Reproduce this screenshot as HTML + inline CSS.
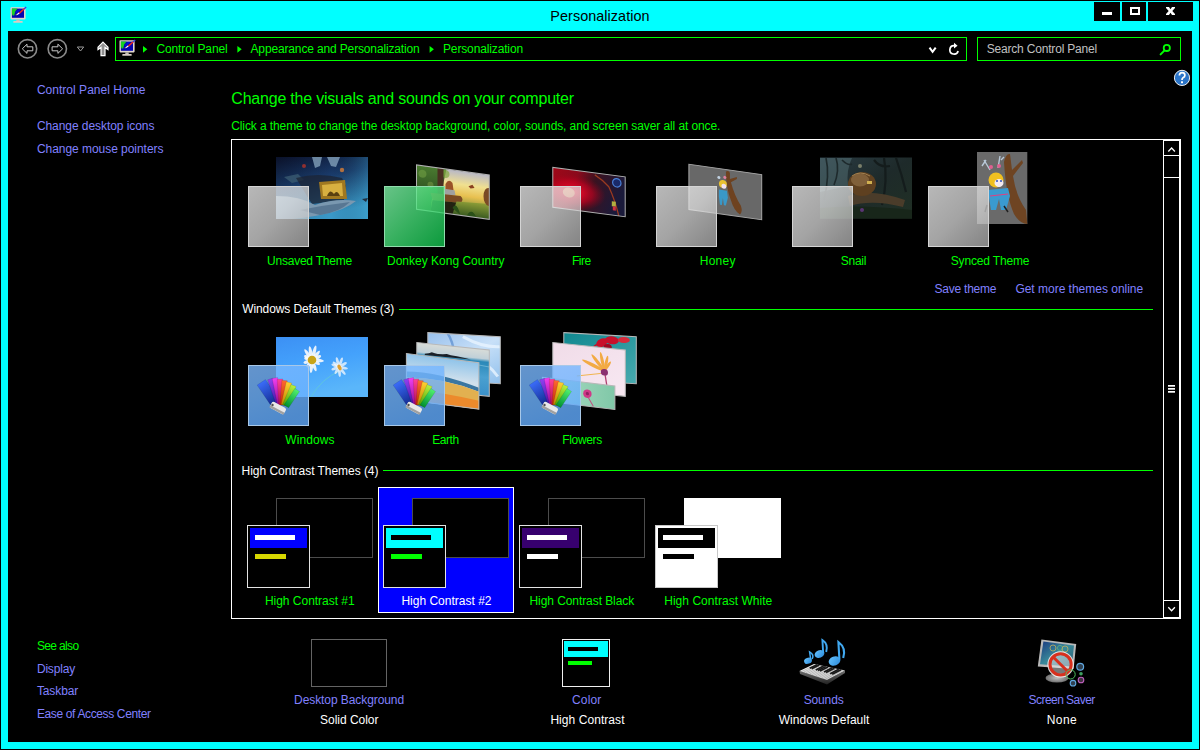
<!DOCTYPE html>
<html><head><meta charset="utf-8">
<style>
html,body{margin:0;padding:0;width:1200px;height:750px;overflow:hidden;background:#000;}
body{position:relative;font-family:"Liberation Sans",sans-serif;}
.a{position:absolute;box-sizing:border-box;}
.t{position:absolute;white-space:pre;font-family:"Liberation Sans",sans-serif;}
svg{position:absolute;overflow:visible;}
</style></head><body>
<!-- frame -->
<div class="a" style="left:1px;top:1px;width:1198px;height:748px;background:#00ffff"></div>
<div class="a" style="left:8px;top:31px;width:1184px;height:711px;background:#000"></div>
<!-- caption buttons -->
<div class="a" style="left:1094px;top:2px;width:26px;height:19px;background:#000"></div>
<div class="a" style="left:1122px;top:2px;width:24px;height:19px;background:#000"></div>
<div class="a" style="left:1148px;top:2px;width:45px;height:19px;background:#000"></div>
<div class="a" style="left:1102px;top:12px;width:10px;height:3px;background:#fff"></div>
<div class="a" style="left:1130px;top:7px;width:10px;height:8px;border:2px solid #fff"></div>
<svg style="left:0;top:0" width="1200" height="30"><path d="M1166 7 L1169 7 L1170.5 9.2 L1172 7 L1175 7 L1175 8 L1172.3 11 L1175 14 L1175 15 L1172 15 L1170.5 12.8 L1169 15 L1166 15 L1166 14 L1168.7 11 L1166 8 Z" fill="#fff"/></svg>
<!-- title icon -->
<svg style="left:0;top:0" width="40" height="30">
 <g id="cpicon">
  <rect x="10.5" y="7.3" width="15.1" height="12.1" rx="0.8" fill="#e2d6cc"/>
  <rect x="11.9" y="8.6" width="12.1" height="9.2" fill="#0404b0"/>
  <path d="M11.9 8.6 L17.6 8.6 L15.2 11.6 L14.2 15.4 L12.6 15.4 L11.9 13.5 Z" fill="#18d020"/>
  <path d="M15.3 12 L19.8 8.8 L21 9.6 L16.4 13.2 Z" fill="#0010e0" opacity="0.8"/>
  <path d="M18.6 12.8 L23.8 8.2 L24.8 9.2 L19.8 13.8 Z" fill="#f02a20"/>
  <path d="M23.6 8.4 L25.6 6.6 L26.6 7.6 L24.6 9.4 Z" fill="#3040e0"/>
  <path d="M16.6 14.2 L18.8 12.6 L19.6 13.6 L17.4 15 Z" fill="#ffffff"/>
  <path d="M15.6 14.8 L16.8 14 L17.2 14.8 L16 15.4 Z" fill="#d0a060"/>
  <rect x="16.3" y="19.4" width="3.4" height="1.7" fill="#c8c0b8"/>
  <rect x="13.3" y="21.1" width="9.4" height="1.6" rx="0.5" fill="#d8ccc4"/>
 </g>
</svg>
<svg style="left:109px;top:33px" width="40" height="30"><use href="#cpicon"/></svg>
<!-- nav buttons -->
<svg style="left:0;top:30px" width="120" height="40">
 <circle cx="27.5" cy="18.8" r="9.2" stroke="#8a8a8a" stroke-width="1.6" fill="none"/>
 <circle cx="57.3" cy="18.8" r="9.2" stroke="#8a8a8a" stroke-width="1.6" fill="none"/>
 <path d="M22.3 18.8 L27 14.2 L27 16.8 L32.8 16.8 L32.8 20.8 L27 20.8 L27 23.4 Z" stroke="#c8c8c8" stroke-width="1" fill="none" stroke-linejoin="miter"/>
 <path d="M62.6 18.8 L57.9 14.2 L57.9 16.8 L52.1 16.8 L52.1 20.8 L57.9 20.8 L57.9 23.4 Z" stroke="#c8c8c8" stroke-width="1" fill="none"/>
 <path d="M77.3 17 L83.7 17 L80.5 21 Z" stroke="#9a9a9a" stroke-width="1" fill="none"/>
 <path d="M103 12.2 L108 17.2 L108 19.6 L105 17.4 L105 25.6 L101 25.6 L101 17.4 L98 19.6 L98 17.2 Z" stroke="#fff" stroke-width="1.2" fill="#909090"/>
</svg>
<!-- breadcrumb arrows -->
<svg style="left:0;top:30px" width="500" height="40">
 <path d="M143 16 L147.3 19.3 L143 22.8 Z" fill="#00ff00"/>
 <path d="M237.4 16 L241.7 19.3 L237.4 22.8 Z" fill="#00ff00"/>
 <path d="M429.6 16 L433.9 19.3 L429.6 22.8 Z" fill="#00ff00"/>
</svg>
<!-- dropdown chevron + refresh -->
<svg style="left:900px;top:30px" width="300" height="70">
 <path d="M929.5 17.6 L932.6 21.8 L935.7 17.6" transform="translate(-900,0)" stroke="#fff" stroke-width="2" fill="none"/>
 <path d="M58.1 21 A4.2 4.2 0 1 1 54.3 15.7" stroke="#fff" stroke-width="1.7" fill="none"/>
 <path d="M54 12.8 L57.6 15.7 L54 18.4 Z" fill="#fff"/>
 <!-- search -->
 <circle cx="266.8" cy="17.9" r="3.1" stroke="#00ff00" stroke-width="1.8" fill="none"/>
 <path d="M264.3 20.6 L260.6 24.4" stroke="#00ff00" stroke-width="2" stroke-linecap="round"/>
 <!-- help -->
 <circle cx="282" cy="47.9" r="7.6" fill="#2a74c8" stroke="#f0f0f0" stroke-width="1"/>
 <path d="M279.4 45.6 Q279.4 42.6 282.1 42.6 Q284.9 42.6 284.9 45.2 Q284.9 46.8 283 47.8 Q282 48.4 282 50" stroke="#fff" stroke-width="1.7" fill="none"/>
 <rect x="281" y="51.3" width="2" height="1.9" fill="#fff"/>
</svg>

<!-- address & search -->
<div class="a" style="left:115px;top:37px;width:852px;height:24px;border:1px solid #00ff00"></div>
<div class="a" style="left:977px;top:37px;width:204px;height:24px;border:1px solid #00ff00"></div>
<!-- list box -->
<div class="a" style="left:231px;top:139px;width:950px;height:480px;border:1px solid #fff"></div>
<div class="a" style="left:1163px;top:139px;width:1px;height:480px;background:#fff"></div>
<div class="a" style="left:1179px;top:139px;width:1px;height:480px;background:#fff"></div>
<div class="a" style="left:1163px;top:140px;width:17px;height:1px;background:#fff"></div>
<div class="a" style="left:1163px;top:155px;width:17px;height:1px;background:#fff"></div>
<div class="a" style="left:1163px;top:177px;width:17px;height:1px;background:#fff"></div>
<div class="a" style="left:1163px;top:600px;width:17px;height:1px;background:#fff"></div>
<div class="a" style="left:1163px;top:617px;width:17px;height:1px;background:#fff"></div>
<svg style="left:1160px;top:130px" width="30" height="500">
 <path d="M8.3 21.5 L11.6 18 L14.9 21.5" stroke="#fff" stroke-width="1.3" fill="none"/>
 <path d="M8.3 477.3 L11.6 480.8 L14.9 477.3" stroke="#fff" stroke-width="1.3" fill="none"/>
 <rect x="8" y="255" width="7" height="1.7" fill="#fff"/>
 <rect x="8" y="258" width="7" height="1.7" fill="#fff"/>
 <rect x="8" y="261" width="7" height="1.7" fill="#fff"/>
</svg>

<svg style="left:0;top:0" width="1200" height="750">
<defs>
<linearGradient id="glass" x1="0" y1="0" x2="1" y2="1">
 <stop offset="0" stop-color="#ffffff" stop-opacity="0.72"/>
 <stop offset="0.5" stop-color="#e4e4e4" stop-opacity="0.72"/>
 <stop offset="1" stop-color="#b7b7b7" stop-opacity="0.72"/>
</linearGradient>
<linearGradient id="glassG" x1="0" y1="0" x2="1" y2="1">
 <stop offset="0" stop-color="#85fbae" stop-opacity="0.78"/>
 <stop offset="0.5" stop-color="#48e27b" stop-opacity="0.78"/>
 <stop offset="1" stop-color="#0fc54d" stop-opacity="0.78"/>
</linearGradient>
<linearGradient id="glassB" x1="0" y1="0" x2="0.4" y2="1">
 <stop offset="0" stop-color="#7db9ff" stop-opacity="0.8"/>
 <stop offset="0.5" stop-color="#70b4ff" stop-opacity="0.8"/>
 <stop offset="1" stop-color="#62acff" stop-opacity="0.8"/>
</linearGradient>
<linearGradient id="shine" x1="0" y1="0" x2="1" y2="1">
 <stop offset="0" stop-color="#fff" stop-opacity="0.08"/>
 <stop offset="0.5" stop-color="#fff" stop-opacity="0.03"/>
 <stop offset="0.5" stop-color="#fff" stop-opacity="0"/>
 <stop offset="1" stop-color="#fff" stop-opacity="0"/>
</linearGradient>
<linearGradient id="unsv" x1="0" y1="0" x2="0.35" y2="1">
 <stop offset="0" stop-color="#0c1430"/>
 <stop offset="0.45" stop-color="#1a3c6c"/>
 <stop offset="1" stop-color="#3a98c8"/>
</linearGradient>
<linearGradient id="dkc" x1="0" y1="0" x2="0" y2="1">
 <stop offset="0" stop-color="#b8b8c8"/>
 <stop offset="0.3" stop-color="#f0e090"/>
 <stop offset="0.55" stop-color="#e8c050"/>
 <stop offset="0.75" stop-color="#a0a040"/>
 <stop offset="1" stop-color="#406020"/>
</linearGradient>
<linearGradient id="fire" x1="0" y1="0" x2="1" y2="0.2">
 <stop offset="0" stop-color="#a00818"/>
 <stop offset="0.35" stop-color="#8a0a1c"/>
 <stop offset="0.6" stop-color="#3a1220"/>
 <stop offset="1" stop-color="#1a1a3a"/>
</linearGradient>
<radialGradient id="fireglow" cx="0.28" cy="0.55" r="0.45">
 <stop offset="0" stop-color="#ff1030" stop-opacity="0.95"/>
 <stop offset="0.6" stop-color="#d00020" stop-opacity="0.6"/>
 <stop offset="1" stop-color="#a00018" stop-opacity="0"/>
</radialGradient>
<linearGradient id="snail" x1="0" y1="0" x2="1" y2="1">
 <stop offset="0" stop-color="#2a3c44"/>
 <stop offset="0.5" stop-color="#1e2a2a"/>
 <stop offset="1" stop-color="#203024"/>
</linearGradient>
<linearGradient id="win" x1="0" y1="0" x2="0.3" y2="1">
 <stop offset="0" stop-color="#3c90f4"/>
 <stop offset="0.5" stop-color="#44a2fc"/>
 <stop offset="1" stop-color="#5ab6fa"/>
</linearGradient>
<linearGradient id="ice" x1="0" y1="0" x2="1" y2="1">
 <stop offset="0" stop-color="#98c0ec"/>
 <stop offset="0.5" stop-color="#c8e0f8"/>
 <stop offset="1" stop-color="#90c0ec"/>
</linearGradient>
<linearGradient id="sea" x1="0" y1="0" x2="0" y2="1">
 <stop offset="0" stop-color="#d8dcd8"/>
 <stop offset="0.2" stop-color="#c0d0d8"/>
 <stop offset="0.27" stop-color="#2a88b8"/>
 <stop offset="0.6" stop-color="#4aa0d0"/>
 <stop offset="1" stop-color="#3a90c8"/>
</linearGradient>
<linearGradient id="desert" x1="0" y1="0" x2="0" y2="1">
 <stop offset="0" stop-color="#90c4ea"/>
 <stop offset="0.45" stop-color="#d0e0ec"/>
 <stop offset="1" stop-color="#d0e0ec"/>
</linearGradient>
<linearGradient id="teal" x1="0" y1="0" x2="1" y2="1">
 <stop offset="0" stop-color="#108890"/>
 <stop offset="1" stop-color="#48aaae"/>
</linearGradient>
<linearGradient id="pink" x1="0" y1="0" x2="1" y2="1">
 <stop offset="0" stop-color="#f0dce8"/>
 <stop offset="1" stop-color="#f8e8f2"/>
</linearGradient>
<linearGradient id="mint" x1="0" y1="0" x2="1" y2="0">
 <stop offset="0" stop-color="#b0dcc4"/>
 <stop offset="1" stop-color="#80c8a8"/>
</linearGradient>
<linearGradient id="unsvR" x1="0" y1="0" x2="1" y2="0">
 <stop offset="0" stop-color="#000" stop-opacity="0.15"/>
 <stop offset="0.6" stop-color="#000" stop-opacity="0"/>
 <stop offset="1" stop-color="#40b0d0" stop-opacity="0.25"/>
</linearGradient>
<linearGradient id="jungle" x1="0" y1="0" x2="0" y2="1">
 <stop offset="0" stop-color="#4a7a30"/>
 <stop offset="1" stop-color="#1e3a18"/>
</linearGradient>
<linearGradient id="grass" x1="0" y1="0" x2="0" y2="1">
 <stop offset="0" stop-color="#90a038"/>
 <stop offset="1" stop-color="#3a5a20"/>
</linearGradient>
</defs>
<g>
<rect x="276" y="157" width="92" height="62" fill="url(#unsv)"/>
<rect x="276" y="157" width="92" height="62" fill="url(#unsvR)"/>
<path d="M312 157 L322 157 L320 166 L315 168 Z M327 157 L340 157 L336 167 L331 166 Z" fill="#8aa8c0" opacity="0.75"/>
<path d="M284 177 L298 174 L304 180 L292 183 Z" fill="#3a5a70" opacity="0.8"/>
<path d="M296 178 Q318 172 342 178 L346 186 L344 200 L312 204 Z" fill="#1c2434" opacity="0.75"/>
<path d="M319 182 L345 180 L347 199 L321 199 Z" fill="#a07820"/>
<path d="M322 185 L342 183 L343 196 L323 196 Z" fill="#d8b040"/>
<path d="M327 196 Q330 188 334 194 Q337 189 340 196 Z" fill="#5a4010"/>
<path d="M276 196 Q300 196 315 205 Q335 198 356 201 Q345 210 325 214 Q300 219 290 219 L276 219 Z" fill="#7a98b0"/>
<path d="M300 210 Q325 205 350 202 Q340 212 320 215 Z" fill="#4a6a88" opacity="0.7"/>
<circle cx="342" cy="170" r="2.2" fill="#b07040"/>
<circle cx="304" cy="166" r="2" fill="#903030"/>
<path d="M362 199 L368 198 L366 202 Z" fill="#203040"/>
</g>
<rect x="248.5" y="186.5" width="60" height="60" fill="url(#glass)" stroke="#d4d4d4" stroke-width="1"/>
<clipPath id="cdkc"><rect x="0" y="0" width="72.8" height="44.3"/></clipPath>
<g transform="matrix(1,0.139,0,1,416.5,164.9)"><g clip-path="url(#cdkc)">
<rect x="0" y="0" width="72.8" height="44.3" fill="url(#dkc)"/>
<path d="M0 0 L30 0 L27 14 L24 27 L16 28 L14 44.3 L0 44.3 Z" fill="url(#jungle)"/>
<circle cx="6" cy="8" r="4" fill="#7aa848" opacity="0.5"/><circle cx="14" cy="18" r="3" fill="#90b050" opacity="0.4"/><circle cx="29" cy="5" r="4" fill="#80a840" opacity="0.7"/>
<rect x="21" y="0" width="6" height="27" fill="#4a3020"/>
<path d="M29 15 Q32 9 36 13 L37 20 L29 21 Z" fill="#9a5228"/>
<path d="M28 20 L38 20 L39 25 L28 26 Z" fill="#a0a0a0"/>
<path d="M14 26 L44 25 Q48 28 44 32 L16 33 Z" fill="#7a4a24"/>
<path d="M16 33 L42 32 L38 44.3 L14 44.3 Z" fill="#222212"/>
<path d="M40 31 L72.8 29 L72.8 44.3 L36 44.3 Z" fill="url(#grass)"/>
<path d="M36 38 Q40 30 44 44.3 Z M50 44.3 Q55 34 60 44.3 Z" fill="#2a5018"/>
<ellipse cx="72" cy="22" rx="5" ry="9" fill="#7a4a24"/>
<path d="M52 14 L56 12 L58 15 L54 16 Z" fill="#8a4020"/>
</g><rect x="0" y="0" width="72.8" height="44.3" fill="none" stroke="#b0b0b0" stroke-width="1"/>
</g>
<rect x="384.5" y="186.5" width="60" height="60" fill="url(#glassG)" stroke="#90dcac" stroke-width="1"/>
<g transform="matrix(1,0.131,0,1,552.8,167.4)">
<rect x="0" y="0" width="72.4" height="39.9" fill="url(#fire)"/>
<rect x="0" y="0" width="72.4" height="39.9" fill="url(#fireglow)"/>
<ellipse cx="16" cy="23" rx="6" ry="5" fill="#f0e890" opacity="0.55"/>
<circle cx="64" cy="7" r="4.2" fill="#1a2a6a" stroke="#4a80d8" stroke-width="1.2"/>
<path d="M42 2 Q50 6 56 12 Q62 24 66 39.9" stroke="#9a3a20" stroke-width="1.3" fill="none"/>
<rect x="59" y="26" width="4" height="5" fill="#b0b040"/><rect x="60" y="31" width="3" height="4" fill="#d03040"/>
<rect x="0" y="0" width="72.4" height="39.9" fill="none" stroke="#b0b0b0" stroke-width="1"/>
</g>
<rect x="520.5" y="186.5" width="60" height="60" fill="url(#glass)" stroke="#d4d4d4" stroke-width="1"/>
<g transform="matrix(1,0.141,0,1,688.9,164.3)">
<rect x="0" y="0" width="72.8" height="45.2" fill="#686868" stroke="#a8a8a8" stroke-width="1"/>
<path d="M37 2 Q40 0 41 3 L41 9 L48 6 L48 8 L42 12 Q46 26 52 34 Q54 40 51 43 Q45 40 42 30 Q37 18 37 2 Z" fill="#6e4220"/>
<circle cx="34" cy="15" r="4" fill="#e8c030"/>
<circle cx="35" cy="17" r="2.5" fill="#f0e0f0"/>
<path d="M30 21 L38 21 L39 28 L37 36 L35 36 L34 29 L33 36 L31 36 L30 28 Z" fill="#3a98c8"/>
<circle cx="30" cy="9" r="1.5" fill="#c0d0e0"/><circle cx="36" cy="8" r="1.5" fill="#e080a0"/>
</g>
<rect x="656.5" y="186.5" width="60" height="60" fill="url(#glass)" stroke="#d4d4d4" stroke-width="1"/>
<rect x="820" y="157.5" width="92" height="61" fill="url(#snail)"/>
<path d="M820 158 L852 158 Q846 170 848 186 L820 192 Z" fill="#5a787c" opacity="0.45"/>
<path d="M826 158 Q830 175 824 200 M836 158 Q840 170 834 185 M842 160 Q848 166 852 164" stroke="#1e2a2c" stroke-width="1.6" fill="none"/>
<path d="M884 158 Q888 180 882 205 M896 158 Q902 175 906 192 M874 160 Q880 168 890 166" stroke="#141c1c" stroke-width="2.2" fill="none"/>
<path d="M848 196 Q870 188 905 200 L903 207 Q872 199 850 206 Z" fill="#4a3c2a"/>
<ellipse cx="862" cy="184" rx="14" ry="12" fill="#5e4020"/>
<ellipse cx="860" cy="180" rx="9" ry="6.5" fill="#80603a"/>
<path d="M852 176 Q860 170 870 176" stroke="#a08050" stroke-width="1" fill="none"/>
<rect x="867" y="181" width="5" height="3" fill="#d0b050"/>
<circle cx="860" cy="166" r="2" fill="#a0a080" opacity="0.7"/>
<path d="M820 208 Q860 204 912 210 L912 218.5 L820 218.5 Z" fill="#18261a"/>
<circle cx="862" cy="210" r="2" fill="#6a3a8a" opacity="0.8"/>
<rect x="792.5" y="186.5" width="60" height="60" fill="url(#glass)" stroke="#d4d4d4" stroke-width="1"/>
<rect x="977" y="152" width="50.3" height="72" fill="#6a6a6a"/>
<path d="M1004 162 Q1006 153 1010 154 L1012 170 L1022 160 L1023 163 L1013 176 Q1016 196 1026 210 L1027.3 224 Q1020 224 1014 214 Q1006 196 1004 162 Z" fill="#6e4422"/>
<path d="M984 160 L990 170 M986 160 L982 166 M1000 156 L998 168 M1001 160 L1004 157" stroke="#b8c8d8" stroke-width="1.4"/>
<circle cx="991" cy="167" r="2" fill="#e06090"/><circle cx="999" cy="166" r="2" fill="#e06090"/>
<circle cx="996" cy="180" r="7.5" fill="#f0c020"/>
<ellipse cx="999" cy="183" rx="4.5" ry="4" fill="#f4eaf0"/>
<circle cx="997" cy="181" r="1" fill="#3050c0"/><circle cx="1001" cy="181" r="1" fill="#3050c0"/>
<path d="M988 190 L1008 188 L1010 196 L1006 210 L1001 210 L999 199 L996 210 L991 210 L989 198 Z" fill="#3a9ad0"/>
<path d="M990 196 L1008 194" stroke="#e04080" stroke-width="1.2"/>
<path d="M987 205 L985 212 M1004 206 L1008 212" stroke="#202020" stroke-width="1.5"/>
<rect x="928.5" y="186.5" width="60" height="60" fill="url(#glass)" stroke="#d4d4d4" stroke-width="1"/>
<rect x="399" y="309" width="754" height="1" fill="#00ff00"/>
<rect x="383" y="470" width="770" height="1" fill="#00ff00"/>
<rect x="276" y="337" width="92" height="60" fill="url(#win)"/>
<path d="M340 371 Q322 378 311 397" stroke="#60c8d8" stroke-width="1" fill="none" opacity="0.8"/>
<g fill="#f8fafc">
<ellipse cx="312" cy="355.5" rx="1.7" ry="4.5" transform="rotate(-60 312 360)" opacity="0.9"/>
<ellipse cx="312" cy="353.5" rx="1.7" ry="6.5" transform="rotate(-35 312 360)" opacity="0.9"/>
<ellipse cx="312" cy="353.0" rx="1.7" ry="7.0" transform="rotate(-10 312 360)" opacity="0.9"/>
<ellipse cx="312" cy="352.5" rx="1.7" ry="7.5" transform="rotate(15 312 360)" opacity="0.9"/>
<ellipse cx="312" cy="354.0" rx="1.7" ry="6.0" transform="rotate(40 312 360)" opacity="0.9"/>
<ellipse cx="312" cy="355.0" rx="1.7" ry="5.0" transform="rotate(65 312 360)" opacity="0.9"/>
<ellipse cx="312" cy="354.0" rx="1.7" ry="6.0" transform="rotate(95 312 360)" opacity="0.9"/>
<ellipse cx="312" cy="355.5" rx="1.7" ry="4.5" transform="rotate(120 312 360)" opacity="0.9"/>
<ellipse cx="312" cy="354.0" rx="1.7" ry="6.0" transform="rotate(160 312 360)" opacity="0.9"/>
<ellipse cx="312" cy="353.5" rx="1.7" ry="6.5" transform="rotate(185 312 360)" opacity="0.9"/>
<ellipse cx="312" cy="355.5" rx="1.7" ry="4.5" transform="rotate(215 312 360)" opacity="0.9"/>
<ellipse cx="312" cy="355.5" rx="1.7" ry="4.5" transform="rotate(250 312 360)" opacity="0.9"/>
<ellipse cx="312" cy="356.0" rx="1.7" ry="4.0" transform="rotate(285 312 360)" opacity="0.9"/>
<ellipse cx="339" cy="363.0" rx="1.4" ry="4.0" transform="rotate(-50 339 367)" opacity="0.75"/>
<ellipse cx="339" cy="362.0" rx="1.4" ry="5.0" transform="rotate(-15 339 367)" opacity="0.75"/>
<ellipse cx="339" cy="362.0" rx="1.4" ry="5.0" transform="rotate(20 339 367)" opacity="0.75"/>
<ellipse cx="339" cy="362.5" rx="1.4" ry="4.5" transform="rotate(60 339 367)" opacity="0.75"/>
<ellipse cx="339" cy="362.5" rx="1.4" ry="4.5" transform="rotate(100 339 367)" opacity="0.75"/>
<ellipse cx="339" cy="362.0" rx="1.4" ry="5.0" transform="rotate(140 339 367)" opacity="0.75"/>
<ellipse cx="339" cy="362.0" rx="1.4" ry="5.0" transform="rotate(175 339 367)" opacity="0.75"/>
<ellipse cx="339" cy="363.0" rx="1.4" ry="4.0" transform="rotate(210 339 367)" opacity="0.75"/>
<ellipse cx="339" cy="363.0" rx="1.4" ry="4.0" transform="rotate(250 339 367)" opacity="0.75"/>
<ellipse cx="339" cy="363.0" rx="1.4" ry="4.0" transform="rotate(290 339 367)" opacity="0.75"/>
</g>
<circle cx="312" cy="360" r="4.3" fill="#c8a418"/>
<ellipse cx="339.5" cy="367.5" rx="1.8" ry="3" fill="#e0a030" transform="rotate(-25 339.5 367.5)"/>
<rect x="248.5" y="365.5" width="60" height="60" fill="url(#glassB)" stroke="#a8c8e8" stroke-width="1"/>
<linearGradient id="sw0_0" x1="0" y1="0" x2="0" y2="1"><stop offset="0" stop-color="#3a6cf8"/><stop offset="1" stop-color="#0c2080"/></linearGradient>
<linearGradient id="sw0_1" x1="0" y1="0" x2="0" y2="1"><stop offset="0" stop-color="#9040f0"/><stop offset="1" stop-color="#4010a0"/></linearGradient>
<linearGradient id="sw0_2" x1="0" y1="0" x2="0" y2="1"><stop offset="0" stop-color="#f040f0"/><stop offset="1" stop-color="#900890"/></linearGradient>
<linearGradient id="sw0_3" x1="0" y1="0" x2="0" y2="1"><stop offset="0" stop-color="#ff4098"/><stop offset="1" stop-color="#b01050"/></linearGradient>
<linearGradient id="sw0_4" x1="0" y1="0" x2="0" y2="1"><stop offset="0" stop-color="#ff6830"/><stop offset="1" stop-color="#c02808"/></linearGradient>
<linearGradient id="sw0_5" x1="0" y1="0" x2="0" y2="1"><stop offset="0" stop-color="#ffd030"/><stop offset="1" stop-color="#c08000"/></linearGradient>
<linearGradient id="sw0_6" x1="0" y1="0" x2="0" y2="1"><stop offset="0" stop-color="#b8f040"/><stop offset="1" stop-color="#50a000"/></linearGradient>
<linearGradient id="sw0_7" x1="0" y1="0" x2="0" y2="1"><stop offset="0" stop-color="#50f070"/><stop offset="1" stop-color="#009030"/></linearGradient>
<rect x="277.0" y="376.0" width="10" height="29.0" fill="url(#sw0_0)" stroke="#000" stroke-opacity="0.25" stroke-width="0.4" transform="rotate(-34 282 413)"/>
<rect x="279.2" y="377.0" width="5.5" height="28.0" fill="url(#sw0_1)" stroke="#000" stroke-opacity="0.25" stroke-width="0.4" transform="rotate(-19 282 413)"/>
<rect x="279.2" y="377.3" width="5.5" height="27.7" fill="url(#sw0_2)" stroke="#000" stroke-opacity="0.25" stroke-width="0.4" transform="rotate(-11.5 282 413)"/>
<rect x="279.2" y="379.0" width="5.5" height="26.0" fill="url(#sw0_3)" stroke="#000" stroke-opacity="0.25" stroke-width="0.4" transform="rotate(-3.4 282 413)"/>
<rect x="279.2" y="380.4" width="5.5" height="24.6" fill="url(#sw0_4)" stroke="#000" stroke-opacity="0.25" stroke-width="0.4" transform="rotate(4.6 282 413)"/>
<rect x="279.2" y="381.7" width="5.5" height="23.3" fill="url(#sw0_5)" stroke="#000" stroke-opacity="0.25" stroke-width="0.4" transform="rotate(13 282 413)"/>
<rect x="279.2" y="383.2" width="5.5" height="21.8" fill="url(#sw0_6)" stroke="#000" stroke-opacity="0.25" stroke-width="0.4" transform="rotate(23 282 413)"/>
<rect x="279.2" y="385.4" width="5.5" height="19.6" fill="url(#sw0_7)" stroke="#000" stroke-opacity="0.25" stroke-width="0.4" transform="rotate(33.5 282 413)"/>
<rect x="270" y="404.5" width="16" height="7" rx="2" fill="#e8e8e8" transform="rotate(28 278 408)"/>
<rect x="270" y="409" width="16" height="2.5" fill="#a0a0a0" transform="rotate(28 278 408)"/>
<circle cx="272.5" cy="405" r="1.2" fill="#505050"/>
<g transform="matrix(1,0.0566,0,1,427.8,332.6)"><rect x="0" y="0" width="72.5" height="47" fill="url(#ice)"/><path d="M20 0 Q30 15 26 47" stroke="#4a80c8" stroke-width="2.5" fill="none" opacity="0.6"/><path d="M35 2 Q55 12 72 10 M40 20 Q60 26 70 40" stroke="#e8f4ff" stroke-width="3" fill="none" opacity="0.8"/><rect x="0" y="0" width="72.5" height="47" fill="none" stroke="#b8b8b8" stroke-width="1"/></g>
<g transform="matrix(1,0.103,0,1,416.8,342.5)"><rect x="0" y="0" width="72.5" height="46.4" fill="url(#sea)"/><path d="M8 10.5 L12 9.6 L15 8.2 L18 8.8 L21 9.4 L26 9 L30 8.4 L34 9.2 L40 9.6 L48 10.6 L54 11.4 L8 11.8 Z" fill="#1a2028"/><path d="M0 16 Q36 13 72.5 17" stroke="#8cc8e0" stroke-width="1.2" fill="none" opacity="0.6"/><rect x="0" y="0" width="72.5" height="46.4" fill="none" stroke="#b8b8b8" stroke-width="1"/></g>
<g transform="matrix(1,0.128,0,1,406.4,353.5)"><rect x="0" y="0" width="72.5" height="46.4" fill="url(#desert)"/><path d="M0 18 Q30 14 72.5 25 L72.5 29 Q35 19 0 24 Z" fill="#2a6a98" opacity="0.9"/><path d="M0 24 Q35 19 72.5 29 L72.5 46.4 L0 46.4 Z" fill="#e2b050"/><path d="M0 36 Q35 34 72.5 38 L72.5 46.4 L0 46.4 Z" fill="#ec8a2c"/><rect x="0" y="0" width="72.5" height="46.4" fill="none" stroke="#b8b8b8" stroke-width="1"/></g>
<rect x="384.5" y="365.5" width="60" height="60" fill="url(#glassB)" stroke="#a8c8e8" stroke-width="1"/>
<linearGradient id="sw136_0" x1="0" y1="0" x2="0" y2="1"><stop offset="0" stop-color="#3a6cf8"/><stop offset="1" stop-color="#0c2080"/></linearGradient>
<linearGradient id="sw136_1" x1="0" y1="0" x2="0" y2="1"><stop offset="0" stop-color="#9040f0"/><stop offset="1" stop-color="#4010a0"/></linearGradient>
<linearGradient id="sw136_2" x1="0" y1="0" x2="0" y2="1"><stop offset="0" stop-color="#f040f0"/><stop offset="1" stop-color="#900890"/></linearGradient>
<linearGradient id="sw136_3" x1="0" y1="0" x2="0" y2="1"><stop offset="0" stop-color="#ff4098"/><stop offset="1" stop-color="#b01050"/></linearGradient>
<linearGradient id="sw136_4" x1="0" y1="0" x2="0" y2="1"><stop offset="0" stop-color="#ff6830"/><stop offset="1" stop-color="#c02808"/></linearGradient>
<linearGradient id="sw136_5" x1="0" y1="0" x2="0" y2="1"><stop offset="0" stop-color="#ffd030"/><stop offset="1" stop-color="#c08000"/></linearGradient>
<linearGradient id="sw136_6" x1="0" y1="0" x2="0" y2="1"><stop offset="0" stop-color="#b8f040"/><stop offset="1" stop-color="#50a000"/></linearGradient>
<linearGradient id="sw136_7" x1="0" y1="0" x2="0" y2="1"><stop offset="0" stop-color="#50f070"/><stop offset="1" stop-color="#009030"/></linearGradient>
<rect x="413.0" y="376.0" width="10" height="29.0" fill="url(#sw136_0)" stroke="#000" stroke-opacity="0.25" stroke-width="0.4" transform="rotate(-34 418 413)"/>
<rect x="415.2" y="377.0" width="5.5" height="28.0" fill="url(#sw136_1)" stroke="#000" stroke-opacity="0.25" stroke-width="0.4" transform="rotate(-19 418 413)"/>
<rect x="415.2" y="377.3" width="5.5" height="27.7" fill="url(#sw136_2)" stroke="#000" stroke-opacity="0.25" stroke-width="0.4" transform="rotate(-11.5 418 413)"/>
<rect x="415.2" y="379.0" width="5.5" height="26.0" fill="url(#sw136_3)" stroke="#000" stroke-opacity="0.25" stroke-width="0.4" transform="rotate(-3.4 418 413)"/>
<rect x="415.2" y="380.4" width="5.5" height="24.6" fill="url(#sw136_4)" stroke="#000" stroke-opacity="0.25" stroke-width="0.4" transform="rotate(4.6 418 413)"/>
<rect x="415.2" y="381.7" width="5.5" height="23.3" fill="url(#sw136_5)" stroke="#000" stroke-opacity="0.25" stroke-width="0.4" transform="rotate(13 418 413)"/>
<rect x="415.2" y="383.2" width="5.5" height="21.8" fill="url(#sw136_6)" stroke="#000" stroke-opacity="0.25" stroke-width="0.4" transform="rotate(23 418 413)"/>
<rect x="415.2" y="385.4" width="5.5" height="19.6" fill="url(#sw136_7)" stroke="#000" stroke-opacity="0.25" stroke-width="0.4" transform="rotate(33.5 418 413)"/>
<rect x="406" y="404.5" width="16" height="7" rx="2" fill="#e8e8e8" transform="rotate(28 414 408)"/>
<rect x="406" y="409" width="16" height="2.5" fill="#a0a0a0" transform="rotate(28 414 408)"/>
<circle cx="408.5" cy="405" r="1.2" fill="#505050"/>
<g transform="matrix(1,0.0566,0,1,563.8,332.6)"><rect x="0" y="0" width="72.5" height="47" fill="url(#teal)"/><g fill="#c8102a"><ellipse cx="38" cy="8" rx="6" ry="4" transform="rotate(-30 38 8)"/><ellipse cx="48" cy="5" rx="7" ry="4"/><ellipse cx="60" cy="4" rx="6" ry="3" fill="#d82a3a"/><ellipse cx="44" cy="12" rx="4" ry="3" fill="#a00820"/></g><path d="M33 10 L28 14" stroke="#c01028" stroke-width="1.5"/><rect x="0" y="0" width="72.5" height="47" fill="none" stroke="#b8b8b8" stroke-width="1"/></g>
<g transform="matrix(1,0.103,0,1,552.8,342.5)"><rect x="0" y="0" width="72.5" height="46.4" fill="url(#pink)"/><path d="M52 25 Q54 36 55 46" stroke="#b04070" stroke-width="1.3" fill="none"/><g fill="#f2a83a" opacity="0.95"><ellipse cx="40.5" cy="18.7" rx="1.8" ry="12.0" transform="rotate(-68 40.5 18.7)"/><ellipse cx="45.2" cy="15.5" rx="1.7" ry="10.0" transform="rotate(-40 45.2 15.5)"/><ellipse cx="49.6" cy="13.9" rx="1.6" ry="9.5" transform="rotate(-12 49.6 13.9)"/><ellipse cx="53.3" cy="15.4" rx="1.5" ry="8.0" transform="rotate(12 53.3 15.4)"/><ellipse cx="54.8" cy="18.1" rx="1.3" ry="6.0" transform="rotate(32 54.8 18.1)"/></g><ellipse cx="51.6" cy="24.5" rx="3.6" ry="3.2" fill="#8a3070"/><path d="M48 26 L24 31" stroke="#f0b040" stroke-width="0.9"/><rect x="0" y="0" width="72.5" height="46.4" fill="none" stroke="#b8b8b8" stroke-width="1"/></g>
<g transform="matrix(1,0.12,0,1,542.4,377.3)"><rect x="0" y="0" width="72.5" height="23.5" fill="url(#mint)"/><circle cx="45" cy="11" r="4.2" fill="#d03888"/><circle cx="45" cy="11" r="1.6" fill="#902060"/><path d="M46 15 L51 23" stroke="#c05080" stroke-width="1" fill="none"/><rect x="0" y="0" width="72.5" height="23.5" fill="none" stroke="#b8b8b8" stroke-width="1"/></g>
<rect x="520.5" y="365.5" width="60" height="60" fill="url(#glassB)" stroke="#a8c8e8" stroke-width="1"/>
<linearGradient id="sw272_0" x1="0" y1="0" x2="0" y2="1"><stop offset="0" stop-color="#3a6cf8"/><stop offset="1" stop-color="#0c2080"/></linearGradient>
<linearGradient id="sw272_1" x1="0" y1="0" x2="0" y2="1"><stop offset="0" stop-color="#9040f0"/><stop offset="1" stop-color="#4010a0"/></linearGradient>
<linearGradient id="sw272_2" x1="0" y1="0" x2="0" y2="1"><stop offset="0" stop-color="#f040f0"/><stop offset="1" stop-color="#900890"/></linearGradient>
<linearGradient id="sw272_3" x1="0" y1="0" x2="0" y2="1"><stop offset="0" stop-color="#ff4098"/><stop offset="1" stop-color="#b01050"/></linearGradient>
<linearGradient id="sw272_4" x1="0" y1="0" x2="0" y2="1"><stop offset="0" stop-color="#ff6830"/><stop offset="1" stop-color="#c02808"/></linearGradient>
<linearGradient id="sw272_5" x1="0" y1="0" x2="0" y2="1"><stop offset="0" stop-color="#ffd030"/><stop offset="1" stop-color="#c08000"/></linearGradient>
<linearGradient id="sw272_6" x1="0" y1="0" x2="0" y2="1"><stop offset="0" stop-color="#b8f040"/><stop offset="1" stop-color="#50a000"/></linearGradient>
<linearGradient id="sw272_7" x1="0" y1="0" x2="0" y2="1"><stop offset="0" stop-color="#50f070"/><stop offset="1" stop-color="#009030"/></linearGradient>
<rect x="549.0" y="376.0" width="10" height="29.0" fill="url(#sw272_0)" stroke="#000" stroke-opacity="0.25" stroke-width="0.4" transform="rotate(-34 554 413)"/>
<rect x="551.2" y="377.0" width="5.5" height="28.0" fill="url(#sw272_1)" stroke="#000" stroke-opacity="0.25" stroke-width="0.4" transform="rotate(-19 554 413)"/>
<rect x="551.2" y="377.3" width="5.5" height="27.7" fill="url(#sw272_2)" stroke="#000" stroke-opacity="0.25" stroke-width="0.4" transform="rotate(-11.5 554 413)"/>
<rect x="551.2" y="379.0" width="5.5" height="26.0" fill="url(#sw272_3)" stroke="#000" stroke-opacity="0.25" stroke-width="0.4" transform="rotate(-3.4 554 413)"/>
<rect x="551.2" y="380.4" width="5.5" height="24.6" fill="url(#sw272_4)" stroke="#000" stroke-opacity="0.25" stroke-width="0.4" transform="rotate(4.6 554 413)"/>
<rect x="551.2" y="381.7" width="5.5" height="23.3" fill="url(#sw272_5)" stroke="#000" stroke-opacity="0.25" stroke-width="0.4" transform="rotate(13 554 413)"/>
<rect x="551.2" y="383.2" width="5.5" height="21.8" fill="url(#sw272_6)" stroke="#000" stroke-opacity="0.25" stroke-width="0.4" transform="rotate(23 554 413)"/>
<rect x="551.2" y="385.4" width="5.5" height="19.6" fill="url(#sw272_7)" stroke="#000" stroke-opacity="0.25" stroke-width="0.4" transform="rotate(33.5 554 413)"/>
<rect x="542" y="404.5" width="16" height="7" rx="2" fill="#e8e8e8" transform="rotate(28 550 408)"/>
<rect x="542" y="409" width="16" height="2.5" fill="#a0a0a0" transform="rotate(28 550 408)"/>
<circle cx="544.5" cy="405" r="1.2" fill="#505050"/>
<rect x="378.5" y="487.5" width="135" height="125" fill="#0000ff" stroke="#fff" stroke-width="1"/>
<rect x="276.5" y="498.5" width="96" height="59" fill="#000" stroke="#4c4c4c" stroke-width="1"/>
<rect x="247.5" y="525.5" width="62" height="62" fill="#000" stroke="#e4e4e4" stroke-width="1"/>
<rect x="250" y="528" width="57" height="20" fill="#0000ff"/>
<rect x="255" y="535" width="40" height="5" fill="#ffffff"/>
<rect x="255" y="554" width="31" height="5" fill="#d8d800"/>
<rect x="412.5" y="498.5" width="96" height="59" fill="#000" stroke="#4c4c4c" stroke-width="1"/>
<rect x="383.5" y="525.5" width="62" height="62" fill="#000" stroke="#e4e4e4" stroke-width="1"/>
<rect x="386" y="528" width="57" height="20" fill="#00ffff"/>
<rect x="391" y="535" width="40" height="5" fill="#000000"/>
<rect x="391" y="554" width="31" height="5" fill="#00ff00"/>
<rect x="548.5" y="498.5" width="96" height="59" fill="#000" stroke="#4c4c4c" stroke-width="1"/>
<rect x="519.5" y="525.5" width="62" height="62" fill="#000" stroke="#e4e4e4" stroke-width="1"/>
<rect x="522" y="528" width="57" height="20" fill="#37006e"/>
<rect x="527" y="535" width="40" height="5" fill="#ffffff"/>
<rect x="527" y="554" width="31" height="5" fill="#ffffff"/>
<rect x="684.5" y="498.5" width="96" height="59" fill="#ffffff" stroke="#ffffff" stroke-width="1"/>
<rect x="655.5" y="525.5" width="62" height="62" fill="#ffffff" stroke="#c8c8c8" stroke-width="1"/>
<rect x="658" y="528" width="57" height="20" fill="#000000"/>
<rect x="663" y="535" width="40" height="5" fill="#ffffff"/>
<rect x="663" y="554" width="31" height="5" fill="#000000"/>
</svg>
<div class="a" style="left:311px;top:639px;width:76px;height:48px;border:1px solid #646464"></div>
<div class="a" style="left:562px;top:639px;width:48px;height:48px;border:1px solid #f0f0f0;background:#000"></div>
<div class="a" style="left:564px;top:641px;width:44px;height:16px;background:#00ffff"></div>
<div class="a" style="left:568px;top:647px;width:30px;height:4px;background:#000"></div>
<div class="a" style="left:568px;top:661px;width:24px;height:4px;background:#00ff00"></div>
<!-- sounds icon -->
<svg style="left:790px;top:630px" width="70" height="60">
 <defs>
  <linearGradient id="kb" x1="0" y1="0" x2="1" y2="1">
   <stop offset="0" stop-color="#f4f4f4"/><stop offset="0.7" stop-color="#dcdcdc"/><stop offset="1" stop-color="#a0a0a0"/>
  </linearGradient>
  <linearGradient id="kbe" x1="0" y1="0" x2="0" y2="1">
   <stop offset="0" stop-color="#707070"/><stop offset="1" stop-color="#202020"/>
  </linearGradient>
  <linearGradient id="note" x1="0" y1="0" x2="1" y2="1">
   <stop offset="0" stop-color="#68c4ff"/><stop offset="1" stop-color="#2a88d8"/>
  </linearGradient>
 </defs>
 <path d="M9.5 41 L37 50 L55 40.5 L55 43.0 L37 54.5 L10.0 44 Z" fill="url(#kbe)"/>
 <path d="M24 34 L55 40.5 L37 50 L9.5 41 Z" fill="url(#kb)"/>
 <path d="M26.21 34.46 L11.46 41.64" stroke="#8a8a8a" stroke-width="0.5"/><path d="M28.43 34.93 L13.43 42.29" stroke="#8a8a8a" stroke-width="0.5"/><path d="M30.64 35.39 L15.39 42.93" stroke="#8a8a8a" stroke-width="0.5"/><path d="M32.86 35.86 L17.36 43.57" stroke="#8a8a8a" stroke-width="0.5"/><path d="M35.07 36.32 L19.32 44.21" stroke="#8a8a8a" stroke-width="0.5"/><path d="M37.29 36.79 L21.29 44.86" stroke="#8a8a8a" stroke-width="0.5"/><path d="M39.50 37.25 L23.25 45.50" stroke="#8a8a8a" stroke-width="0.5"/><path d="M41.71 37.71 L25.21 46.14" stroke="#8a8a8a" stroke-width="0.5"/><path d="M43.93 38.18 L27.18 46.79" stroke="#8a8a8a" stroke-width="0.5"/><path d="M46.14 38.64 L29.14 47.43" stroke="#8a8a8a" stroke-width="0.5"/><path d="M48.36 39.11 L31.11 48.07" stroke="#8a8a8a" stroke-width="0.5"/><path d="M50.57 39.57 L33.07 48.71" stroke="#8a8a8a" stroke-width="0.5"/><path d="M52.79 40.04 L35.04 49.36" stroke="#8a8a8a" stroke-width="0.5"/><path d="M27.10 34.65 L19.68 38.27" stroke="#181818" stroke-width="1.7"/><path d="M29.27 35.10 L21.72 38.82" stroke="#181818" stroke-width="1.7"/><path d="M33.61 36.02 L25.82 39.90" stroke="#181818" stroke-width="1.7"/><path d="M35.78 36.47 L27.87 40.45" stroke="#181818" stroke-width="1.7"/><path d="M37.95 36.92 L29.91 40.99" stroke="#181818" stroke-width="1.7"/><path d="M42.29 37.84 L34.01 42.07" stroke="#181818" stroke-width="1.7"/><path d="M44.46 38.29 L36.05 42.61" stroke="#181818" stroke-width="1.7"/><path d="M48.80 39.20 L40.15 43.70" stroke="#181818" stroke-width="1.7"/><path d="M50.97 39.66 L42.20 44.24" stroke="#181818" stroke-width="1.7"/>
 <!-- notes -->
 <ellipse cx="18" cy="30.8" rx="4" ry="3" fill="url(#note)" transform="rotate(-20 18 30.8)"/>
 <path d="M20.8 30 L19.6 21.8 Q24.5 24.5 22.2 29" stroke="#40a8f0" stroke-width="1.5" fill="none"/>
 <ellipse cx="29.5" cy="24" rx="5" ry="3.8" fill="url(#note)" transform="rotate(-20 29.5 24)"/>
 <path d="M33.2 23 L32.4 10 Q38.5 14 36.2 22" stroke="#40a8f0" stroke-width="1.9" fill="none"/>
 <ellipse cx="44.5" cy="31" rx="6" ry="4.6" fill="url(#note)" transform="rotate(-20 44.5 31)"/>
 <path d="M49.4 29.5 L48.4 12 Q56.5 18 53.2 28" stroke="#40a8f0" stroke-width="2.1" fill="none"/>
</svg>
<!-- screen saver icon -->
<svg style="left:1025px;top:630px" width="70" height="60">
 <defs>
  <linearGradient id="scr" x1="0" y1="0" x2="1" y2="1">
   <stop offset="0" stop-color="#1a3a80"/><stop offset="0.5" stop-color="#3a8a9a"/><stop offset="1" stop-color="#2a5a70"/>
  </linearGradient>
  <radialGradient id="stand" cx="0.5" cy="0.5" r="0.5">
   <stop offset="0" stop-color="#c0c0c0"/><stop offset="1" stop-color="#707070"/>
  </radialGradient>
 </defs>
 <ellipse cx="32" cy="48" rx="11.5" ry="4.5" fill="url(#stand)"/>
 <path d="M16.4 9.4 L51.2 14 L48.6 39 L12.8 36.4 Z" fill="#b8b8b8"/>
 <path d="M18.4 11.6 L49 15.6 L46.8 36.6 L15 34.2 Z" fill="url(#scr)"/>
 <circle cx="28" cy="18" r="3" fill="none" stroke="#c0b060" stroke-width="0.8"/>
 <circle cx="35" cy="18" r="2.6" fill="none" stroke="#60b080" stroke-width="0.8"/>
 <circle cx="40" cy="19" r="3" fill="none" stroke="#c0b060" stroke-width="0.8"/>
 <circle cx="35.6" cy="34.4" r="13.2" fill="#f0f0f0" opacity="0.5"/><circle cx="35.6" cy="34.4" r="12.4" fill="none" stroke="#f8f8f8" stroke-width="1.4" opacity="0.7"/>
 <circle cx="35.6" cy="34.4" r="10.6" fill="none" stroke="#d8301e" stroke-width="3"/>
 <path d="M28.2 27 L43 41.8" stroke="#d8301e" stroke-width="3"/>
 <circle cx="45.6" cy="44.4" r="4.6" fill="none" stroke="#50c060" stroke-width="1"/>
 <circle cx="55.2" cy="36.8" r="3.4" fill="#304050" stroke="#60a8e0" stroke-width="1.2"/>
 <circle cx="56" cy="43.8" r="1.8" fill="#40a060"/>
 <circle cx="56" cy="50" r="2.8" fill="#403040" stroke="#c060c0" stroke-width="1.1"/>
 <circle cx="48" cy="53.2" r="2.8" fill="#304050" stroke="#60a8e0" stroke-width="1.1"/>
</svg>

<div class="t" style="left:550.34px;top:8.11px;font-size:14.4px;line-height:17px;color:#000;letter-spacing:0.057px">Personalization</div>
<div class="t" style="left:156.40px;top:42.04px;font-size:12px;line-height:14px;color:#00ff00;letter-spacing:-0.118px">Control Panel</div>
<div class="t" style="left:250.50px;top:42.04px;font-size:12px;line-height:14px;color:#00ff00;letter-spacing:-0.144px">Appearance and Personalization</div>
<div class="t" style="left:443.00px;top:42.04px;font-size:12px;line-height:14px;color:#00ff00;letter-spacing:-0.140px">Personalization</div>
<div class="t" style="left:986.70px;top:41.84px;font-size:12px;line-height:14px;color:#c0c0c0;letter-spacing:-0.186px">Search Control Panel</div>
<div class="t" style="left:36.90px;top:82.84px;font-size:12px;line-height:14px;color:#8080ff;letter-spacing:0.026px">Control Panel Home</div>
<div class="t" style="left:36.90px;top:119.04px;font-size:12px;line-height:14px;color:#8080ff;letter-spacing:-0.066px">Change desktop icons</div>
<div class="t" style="left:36.90px;top:141.54px;font-size:12px;line-height:14px;color:#8080ff;letter-spacing:-0.041px">Change mouse pointers</div>
<div class="t" style="left:231.30px;top:88.86px;font-size:16px;line-height:19px;color:#00ff00;letter-spacing:-0.209px">Change the visuals and sounds on your computer</div>
<div class="t" style="left:231.20px;top:118.54px;font-size:12px;line-height:14px;color:#00ff00;letter-spacing:-0.092px">Click a theme to change the desktop background, color, sounds, and screen saver all at once.</div>
<div class="t" style="left:267.00px;top:253.84px;font-size:12px;line-height:14px;color:#00ff00;letter-spacing:-0.219px">Unsaved Theme</div>
<div class="t" style="left:387.00px;top:253.84px;font-size:12px;line-height:14px;color:#00ff00;letter-spacing:0.005px">Donkey Kong Country</div>
<div class="t" style="left:572.00px;top:253.84px;font-size:12px;line-height:14px;color:#00ff00;letter-spacing:-0.491px">Fire</div>
<div class="t" style="left:699.70px;top:253.84px;font-size:12px;line-height:14px;color:#00ff00;letter-spacing:0.278px">Honey</div>
<div class="t" style="left:840.70px;top:253.84px;font-size:12px;line-height:14px;color:#00ff00;letter-spacing:-0.222px">Snail</div>
<div class="t" style="left:950.70px;top:253.84px;font-size:12px;line-height:14px;color:#00ff00;letter-spacing:-0.155px">Synced Theme</div>
<div class="t" style="left:934.50px;top:281.84px;font-size:12px;line-height:14px;color:#8080ff;letter-spacing:-0.227px">Save theme</div>
<div class="t" style="left:1015.40px;top:281.84px;font-size:12px;line-height:14px;color:#8080ff;letter-spacing:-0.013px">Get more themes online</div>
<div class="t" style="left:242.20px;top:302.14px;font-size:12px;line-height:14px;color:#ffffff;letter-spacing:-0.096px">Windows Default Themes (3)</div>
<div class="t" style="left:285.30px;top:432.54px;font-size:12px;line-height:14px;color:#00ff00;letter-spacing:0.069px">Windows</div>
<div class="t" style="left:432.20px;top:432.54px;font-size:12px;line-height:14px;color:#00ff00;letter-spacing:-0.422px">Earth</div>
<div class="t" style="left:562.30px;top:432.54px;font-size:12px;line-height:14px;color:#00ff00;letter-spacing:-0.353px">Flowers</div>
<div class="t" style="left:241.60px;top:463.84px;font-size:12px;line-height:14px;color:#ffffff;letter-spacing:-0.041px">High Contrast Themes (4)</div>
<div class="t" style="left:264.90px;top:593.54px;font-size:12px;line-height:14px;color:#00ff00;letter-spacing:-0.016px">High Contrast #1</div>
<div class="t" style="left:401.40px;top:593.54px;font-size:12px;line-height:14px;color:#ffffff;letter-spacing:0.004px">High Contrast #2</div>
<div class="t" style="left:529.50px;top:593.54px;font-size:12px;line-height:14px;color:#00ff00;letter-spacing:-0.075px">High Contrast Black</div>
<div class="t" style="left:664.20px;top:593.54px;font-size:12px;line-height:14px;color:#00ff00;letter-spacing:0.040px">High Contrast White</div>
<div class="t" style="left:36.90px;top:638.84px;font-size:12px;line-height:14px;color:#00ff00;letter-spacing:-0.643px">See also</div>
<div class="t" style="left:36.90px;top:661.64px;font-size:12px;line-height:14px;color:#8080ff;letter-spacing:-0.177px">Display</div>
<div class="t" style="left:36.90px;top:684.44px;font-size:12px;line-height:14px;color:#8080ff;letter-spacing:-0.105px">Taskbar</div>
<div class="t" style="left:36.90px;top:707.24px;font-size:12px;line-height:14px;color:#8080ff;letter-spacing:-0.360px">Ease of Access Center</div>
<div class="t" style="left:294.10px;top:693.04px;font-size:12px;line-height:14px;color:#8080ff;letter-spacing:-0.083px">Desktop Background</div>
<div class="t" style="left:320.10px;top:713.04px;font-size:12px;line-height:14px;color:#ffffff;letter-spacing:-0.030px">Solid Color</div>
<div class="t" style="left:572.10px;top:693.04px;font-size:12px;line-height:14px;color:#8080ff;letter-spacing:0.103px">Color</div>
<div class="t" style="left:550.40px;top:713.04px;font-size:12px;line-height:14px;color:#ffffff;letter-spacing:0.060px">High Contrast</div>
<div class="t" style="left:803.70px;top:693.04px;font-size:12px;line-height:14px;color:#8080ff;letter-spacing:-0.141px">Sounds</div>
<div class="t" style="left:778.70px;top:713.04px;font-size:12px;line-height:14px;color:#ffffff;letter-spacing:0.047px">Windows Default</div>
<div class="t" style="left:1028.50px;top:693.04px;font-size:12px;line-height:14px;color:#8080ff;letter-spacing:-0.537px">Screen Saver</div>
<div class="t" style="left:1046.80px;top:713.04px;font-size:12px;line-height:14px;color:#ffffff;letter-spacing:0.371px">None</div>
</body></html>
